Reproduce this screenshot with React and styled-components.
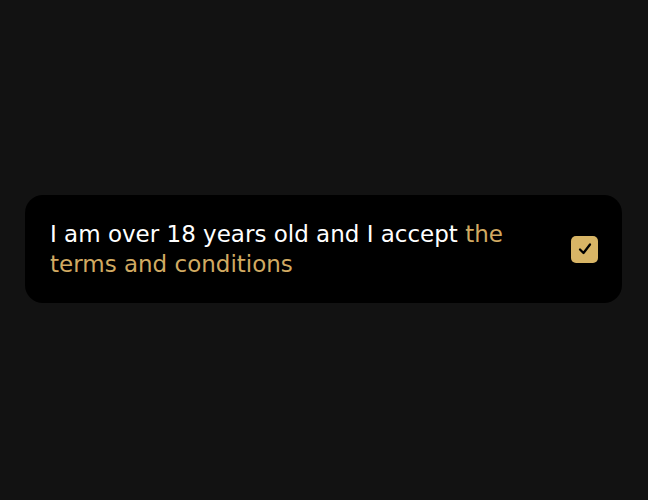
import React from "react";
import styled, { createGlobalStyle } from "styled-components";

const Global = createGlobalStyle`
  html, body { margin: 0; padding: 0; background: #121212; }
  body { font-family: "DejaVu Sans", "Open Sans", sans-serif; }
  #root { min-height: 500px; }
`;

const Page = styled.div`
  width: 648px;
  height: 500px;
  display: flex;
  align-items: center;
  justify-content: center;
  box-sizing: border-box;
  padding: 0 26px 0 25px;
`;

const Card = styled.label`
  flex: 1;
  display: flex;
  align-items: center;
  justify-content: space-between;
  gap: 24px;
  background: #000;
  border-radius: 18px;
  padding: 24px 24px 24px 25px;
  margin-top: -2px;
  cursor: pointer;
`;

const Text = styled.span`
  max-width: 490px;
  color: #fff;
  font-size: 23px;
  line-height: 30px;
`;

const Link = styled.span`
  color: #d1aa62;
`;

const Box = styled.span`
  flex: 0 0 auto;
  width: 27px;
  height: 27px;
  border-radius: 5px;
  background: #d8b566;
  display: flex;
  align-items: center;
  justify-content: center;
`;

export default function App() {
  return (
    <>
      <Global />
      <Page>
        <Card>
          <Text>
            I am over 18 years old and I accept <Link>the terms and conditions</Link>
          </Text>
          <Box>
            <svg width="16" height="16" viewBox="0 0 16 16" fill="none">
              <path d="M3 8.5 L6.5 12 L13 3.5" stroke="#000" strokeWidth="2.3" strokeLinecap="round" strokeLinejoin="round" />
            </svg>
          </Box>
        </Card>
      </Page>
    </>
  );
}
